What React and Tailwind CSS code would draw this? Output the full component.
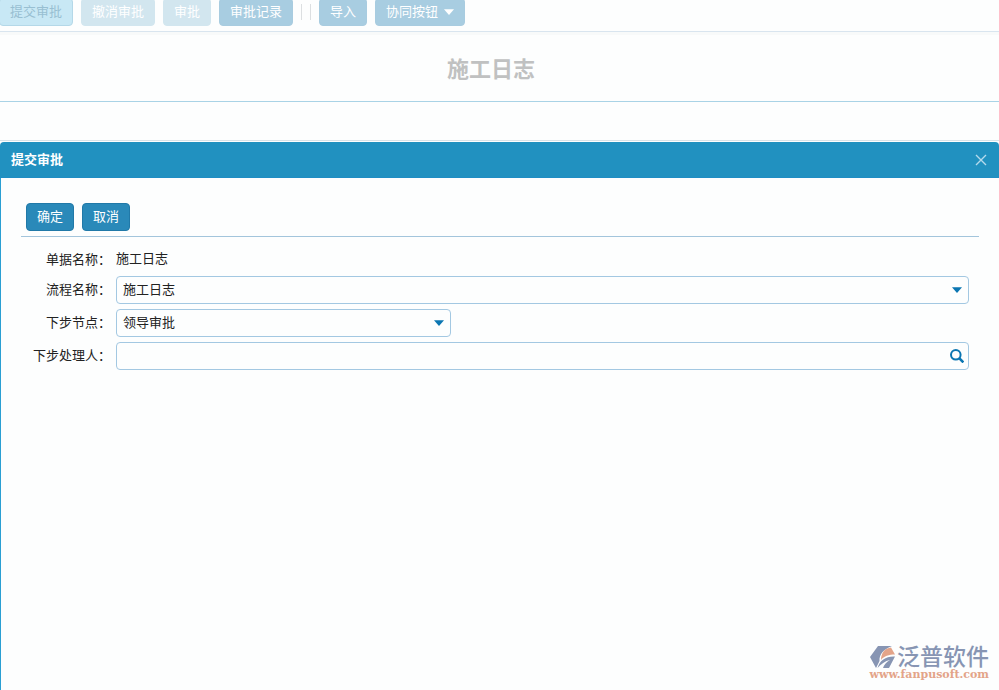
const toolbarButtons = [
  { label: '撤消审批', disabled: true },
  { label: '审批', disabled: true },
  { label: '审批记录', disabled: false },
]

function Caret({ className }) {
  return (
    <svg className={className} viewBox="0 0 10 6" fill="currentColor" aria-hidden="true">
      <path d="M0 0.3h10L5 6z" />
    </svg>
  )
}

function Toolbar() {
  return (
    <div className="-mt-0.5 -ml-px flex gap-2 border-b border-[#d9e5ef] pb-[5px] text-[13px]">
      <button type="button" className="h-7 rounded-[4px] border border-[#b4d8e8] bg-[#c8e8f5] px-2.5 text-[#98bfd2]">
        提交审批
      </button>
      {toolbarButtons.map((button) => (
        <button
          key={button.label}
          type="button"
          disabled={button.disabled}
          className={`h-7 rounded-[4px] border px-2.5 text-white ${
            button.disabled ? 'border-[#d2e6ef] bg-[#d2e6ef]' : 'border-[#a8cce0] bg-[#a8cde1]'
          }`}
        >
          {button.label}
        </button>
      ))}
      <span className="mt-1.5 h-4 w-px bg-[#dcdfe1]" />
      <span className="mt-1.5 h-4 w-px bg-[#dcdfe1]" />
      <button type="button" className="h-7 rounded-[4px] border border-[#a8cce0] bg-[#a8cde1] px-2.5 text-white">
        导入
      </button>
      <button
        type="button"
        className="flex h-7 items-center gap-1.5 rounded-[4px] border border-[#a8cce0] bg-[#a8cde1] px-2.5 text-white"
      >
        协同按钮
        <Caret className="h-1.5 w-2.5" />
      </button>
    </div>
  )
}

function SelectField({ id, label, options, className }) {
  return (
    <div className="flex items-center gap-[5px]">
      <label htmlFor={id} className="w-[90px] shrink-0 text-right">
        {label}：
      </label>
      <div className={`relative ${className}`}>
        <select
          id={id}
          className="block h-7 w-full appearance-none rounded-[4px] border border-[#a3c8e2] bg-transparent px-1.5 pr-8 outline-none"
        >
          {options.map((option) => (
            <option key={option}>{option}</option>
          ))}
        </select>
        <Caret className="pointer-events-none absolute top-[11px] right-[7px] h-1.5 w-2.5 text-[#0b76b2]" />
      </div>
    </div>
  )
}

function SubmitDialog() {
  return (
    <section role="dialog" aria-label="提交审批" className="flex flex-1 flex-col">
      <header className="flex h-9 items-center justify-between rounded-t-[4px] border-b border-[#1f8dc4] bg-[#2191c0] pr-3 pl-[11px]">
        <h2 className="text-[13px] font-bold text-white">提交审批</h2>
        <button type="button" aria-label="关闭" className="text-[#b5daec]">
          <svg className="size-3" viewBox="0 0 12 12" fill="none" stroke="currentColor" strokeWidth="1.4">
            <path d="M1 1l10 10M11 1L1 11" />
          </svg>
        </button>
      </header>

      <form className="flex-1 border-l border-[#2a9fd3] pt-[25px] pr-5 pl-5" onSubmit={(e) => e.preventDefault()}>
        <div className="flex gap-2 border-b border-[#a3c5dc] pb-[5px] pl-[5px] text-[13px] text-white">
          <button type="submit" className="h-7 rounded-[4px] border border-[#2179a8] bg-[#2a89b9] px-2.5">
            确定
          </button>
          <button type="button" className="h-7 rounded-[4px] border border-[#2179a8] bg-[#2a89b9] px-2.5">
            取消
          </button>
        </div>

        <div className="flex flex-col gap-[5px] pt-3 pr-2.5 text-[13px] text-[#222]">
          <div className="flex h-[22px] items-start gap-[5px] leading-5">
            <span className="w-[90px] shrink-0 pt-px text-right">单据名称：</span>
            <span>施工日志</span>
          </div>
          <SelectField id="flow" label="流程名称" options={['施工日志']} className="flex-1" />
          <SelectField id="node" label="下步节点" options={['领导审批']} className="w-[335px]" />
          <div className="flex items-center gap-[5px]">
            <label htmlFor="handler" className="w-[90px] shrink-0 text-right">
              下步处理人：
            </label>
            <div className="relative flex-1">
              <input
                id="handler"
                type="text"
                className="block h-7 w-full rounded-[4px] border border-[#a3c8e2] bg-transparent px-1.5 pr-8 outline-none"
              />
              <button type="button" aria-label="选择处理人" className="absolute top-[7px] right-[5px] text-[#0b76b2]">
                <svg className="size-3.5" viewBox="0 0 14 14" fill="none" stroke="currentColor" strokeWidth="2">
                  <circle cx="5.8" cy="5.8" r="4.8" />
                  <path d="M9.2 9.2l4.2 4.2" strokeWidth="2.6" />
                </svg>
              </button>
            </div>
          </div>
        </div>
      </form>
    </section>
  )
}

function Watermark() {
  return (
    <div className="absolute right-2.5 bottom-[9px] flex flex-col items-end">
      <div className="flex items-center gap-px text-[#8795b3]">
        <svg className="h-6 w-[26px]" viewBox="0 0 26 24" aria-hidden="true">
          <path d="M8 1h14C14 4 9 9 9.500 16L6 23 0 12z" fill="#8795b3" />
          <path d="M11 15C11 8 15 3 21 2.500L25 9.500C19 9.500 14 11 11 15z" fill="#e3a489" />
          <path d="M7.500 23C10 15 16 11 25 11.500L19 23h-6c1-3 3-6 7-8-5 1-9 4-12.500 8z" fill="#8795b3" />
        </svg>
        <span className="text-[23px] leading-6 font-medium">泛普软件</span>
      </div>
      <span className="font-['DejaVu_Serif',serif] text-[11px] leading-3 font-bold text-[#e3a489]">www.fanpusoft.com</span>
    </div>
  )
}

function App() {
  return (
    <div className="relative flex min-h-screen flex-col overflow-hidden bg-[#fdfefe] font-['Liberation_Sans','Noto_Sans_CJK_SC',sans-serif]">
      <Toolbar />
      <div className="h-[3px] bg-[#f8fafa]" />
      <h1 className="border-b border-[#a9d3e6] pt-[19px] pr-[17px] pb-[15px] text-center text-[22px] leading-8 font-bold text-[#c0c1c1]">
        施工日志
      </h1>
      <div className="mb-px h-[39px] border-b border-[#d9e2e8]" />
      <SubmitDialog />
      <Watermark />
    </div>
  )
}

export default App
